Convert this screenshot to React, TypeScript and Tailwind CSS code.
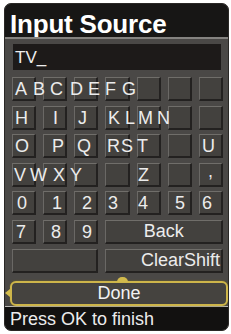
import React from "react";

type Row = {
  cells: number[]; // column spans
  labels?: string[]; // label per cell (for merged cells)
  align?: ("center" | "end")[];
  letters: [string, number][]; // glyph + page x
};

const rows: Row[] = [
  { cells: [1, 1, 1, 1, 1, 1, 1], letters: [["A", 15], ["B", 33], ["C", 50], ["D", 70], ["E", 88], ["F", 105], ["G", 122]] },
  { cells: [1, 1, 1, 1, 1, 1, 1], letters: [["H", 15], ["I", 53], ["J", 78], ["K", 108], ["L", 125], ["M", 138], ["N", 157]] },
  { cells: [1, 1, 1, 1, 1, 1, 1], letters: [["O", 15], ["P", 52], ["Q", 77], ["R", 107], ["S", 121], ["T", 137], ["U", 202]] },
  { cells: [1, 1, 1, 1, 1, 1, 1], letters: [["V", 14], ["W", 30], ["X", 53], ["Y", 70], ["Z", 138], [",", 208]] },
  { cells: [1, 1, 1, 1, 1, 1, 1], letters: [["0", 17], ["1", 52], ["2", 82], ["3", 108], ["4", 138], ["5", 175], ["6", 202]] },
  { cells: [1, 1, 1, 4], labels: ["", "", "", "Back"], align: ["center", "center", "center", "center"], letters: [["7", 16], ["8", 51], ["9", 82]] },
  { cells: [3, 4], labels: ["", "ClearShift"], align: ["center", "end"], letters: [] },
];

const GRID_LEFT = 12;

const cellCls =
  "h-full bg-[#43413e] border-t border-l border-r-2 border-b-2 border-t-[#706e6a] border-l-[#6a6865] border-r-[#232120] border-b-[#232120] flex items-center text-[#ececec] text-[18px] leading-none";

export default function App() {
  return (
    <div className="w-[231px] h-[334px] bg-white pt-[3px] pl-[4px] font-['Liberation_Sans',Arial,sans-serif]">
      <div className="w-[225px] h-[328px] rounded-[7px] overflow-hidden border border-[#2a2826] bg-[#4a4846] flex flex-col">
        {/* title */}
        <div className="h-[33px] bg-[#171615] flex items-end pl-[5px]">
          <span className="text-white font-bold text-[26px] leading-none tracking-[-0.2px]">Input Source</span>
        </div>
        <div className="h-[2px] bg-[#858380]" />

        {/* body */}
        <div className="flex-1 flex flex-col">
          <div className="mt-[5px] ml-[8px] w-[208px] h-[26px] bg-[#1d1a19] flex items-center pl-[2px]">
            <span className="text-[#eeeeee] text-[17px] leading-none">TV_</span>
          </div>

          <div className="mt-[7px] ml-[7px] w-[211px] flex flex-col gap-y-[4.6px]">
            {rows.map((row, ri) => (
              <div key={ri} className="relative h-[24px] grid grid-cols-7 gap-x-[7.17px]">
                {row.cells.map((span, ci) => (
                  <div
                    key={ci}
                    className={`${cellCls} ${span === 3 ? "col-span-3" : span === 4 ? "col-span-4" : ""} ${
                      row.align?.[ci] === "end" ? "justify-end pr-[1px]" : "justify-center"
                    }`}
                  >
                    {row.labels?.[ci] ?? ""}
                  </div>
                ))}
                {row.letters.map(([ch, x]) => (
                  <span
                    key={ch}
                    className={`absolute top-0 h-[24px] flex items-center text-[#ececec] text-[18px] leading-none ${
                      ch === "," ? "pb-[7px]" : ""
                    }`}
                    style={{ left: x - GRID_LEFT }}
                  >
                    {ch}
                  </span>
                ))}
              </div>
            ))}
          </div>

          {/* done */}
          <div className="relative mt-[8px] ml-[5px] w-[218px] h-[25px] rounded-[6px] border-2 border-[#cdb54a] bg-[#45433f] shadow-[0_0_2px_#7a6a20] flex items-center justify-center">
            <span className="text-[#f2f2f2] text-[18px] leading-none">Done</span>
            <div className="absolute -left-[7px] top-1/2 -translate-y-1/2 w-0 h-0 border-y-[4px] border-y-transparent border-r-[5px] border-r-[#d6bf4e]" />
            <div className="absolute -top-[6px] left-[105px] w-[11px] h-[5px] rounded-t-full bg-[#d2ba4c]" />
          </div>
        </div>

        <div className="h-[1px] bg-[#bdbbb8]" />
        {/* status */}
        <div className="h-[23px] bg-[#121110] flex items-center pl-[5px]">
          <span className="text-[#ececec] text-[18px] leading-none">Press OK to finish</span>
        </div>
      </div>
    </div>
  );
}
